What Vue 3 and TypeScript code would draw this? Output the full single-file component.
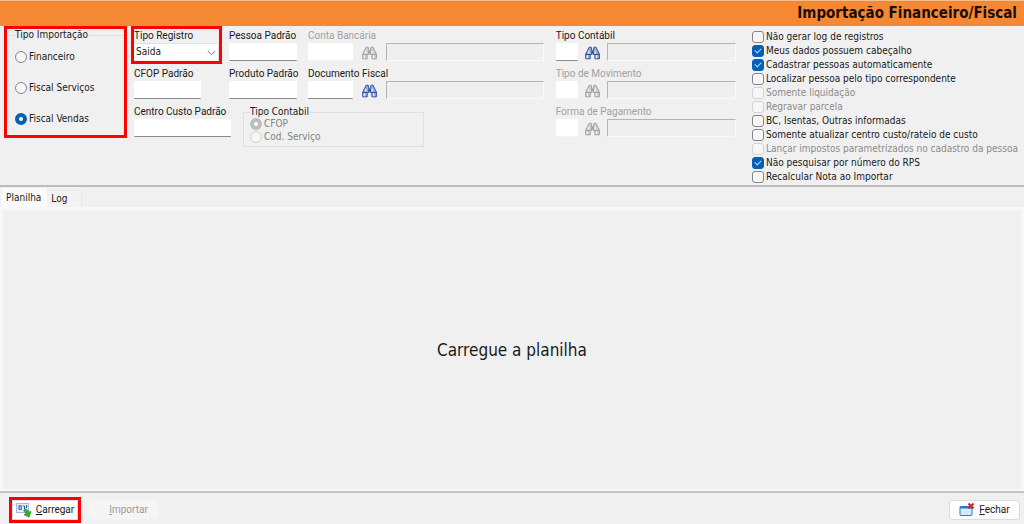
<script setup lang="ts">
import { ref } from 'vue'

interface Option {
  label: string
  checked: boolean
  disabled?: boolean
}

interface Lookup {
  id: string
  label: string
  disabled: boolean
}

const importType = ref('Fiscal Vendas')
const importTypes = ['Financeiro', 'Fiscal Serviços', 'Fiscal Vendas']
const recordType = ref('Saida')
const accountingType = ref('CFOP')
const activeTab = ref('Planilha')
const tabs = ['Planilha', 'Log']

const accountLookup: Lookup = { id: 'conta', label: 'Conta Bancária', disabled: true }
const documentLookup: Lookup = { id: 'documento', label: 'Documento Fiscal', disabled: false }
const sideLookups: Lookup[] = [
  { id: 'contabil', label: 'Tipo Contábil', disabled: false },
  { id: 'movimento', label: 'Tipo de Movimento', disabled: true },
  { id: 'pagamento', label: 'Forma de Pagamento', disabled: true },
]

const options = ref<Option[]>([
  { label: 'Não gerar log de registros', checked: false },
  { label: 'Meus dados possuem cabeçalho', checked: true },
  { label: 'Cadastrar pessoas automaticamente', checked: true },
  { label: 'Localizar pessoa pelo tipo correspondente', checked: false },
  { label: 'Somente liquidação', checked: false, disabled: true },
  { label: 'Regravar parcela', checked: false, disabled: true },
  { label: 'BC, Isentas, Outras informadas', checked: false },
  { label: 'Somente atualizar centro custo/rateio de custo', checked: false },
  { label: 'Lançar impostos parametrizados no cadastro da pessoa', checked: false, disabled: true },
  { label: 'Não pesquisar por número do RPS', checked: true },
  { label: 'Recalcular Nota ao Importar', checked: false },
])
</script>

<template>
  <svg class="defs" aria-hidden="true">
    <symbol id="binoculars" viewBox="0 0 15 14">
      <path d="M4.200 1.200h2l.6 3.300v4H5.200v4.300H.7V8l2-3.800zM9 1.200h2l1.400 3 2 3.800v4.800H9.900V8.500H8.200v-4z" fill="currentColor" fill-opacity=".45" stroke="currentColor" />
      <path d="M6.500 4.500h2.200v3H6.500z" fill="currentColor" />
      <path d="M1 8.500h4M10 8.500h4" stroke="currentColor" />
      <path d="M2.300 9.300v3M3.800 4.800v2.700M11.500 9.300v3M10.200 4.800v2.700" stroke="#fff" stroke-width="1.200" opacity=".85" />
    </symbol>
  </svg>

  <div class="window">
    <header class="title-bar"><h1>Importação Financeiro/Fiscal</h1></header>

    <section class="filters">
      <fieldset class="import-type marked">
        <legend>Tipo Importação</legend>
        <label v-for="type in importTypes" :key="type" class="choice">
          <input v-model="importType" type="radio" name="import-type" :value="type" />
          {{ type }}
        </label>
      </fieldset>

      <div class="fields">
        <div class="field record-type marked">
          <label for="registro">Tipo Registro</label>
          <div class="combo">
            <select id="registro" v-model="recordType">
              <option>Saida</option>
              <option>Entrada</option>
            </select>
            <svg viewBox="0 0 9 6" aria-hidden="true"><path d="M.8 1l3.700 3.700L8.200 1" /></svg>
          </div>
        </div>
        <div class="field person">
          <label for="pessoa">Pessoa Padrão</label>
          <input id="pessoa" type="text" />
        </div>
        <div class="field" :class="{ off: accountLookup.disabled }">
          <label :for="accountLookup.id">{{ accountLookup.label }}</label>
          <div class="lookup wide">
            <input :id="accountLookup.id" type="text" disabled />
            <button type="button" aria-label="Pesquisar conta bancária" disabled><svg><use href="#binoculars" /></svg></button>
            <input class="result" type="text" aria-label="Descrição da conta bancária" disabled />
          </div>
        </div>

        <div class="field cfop">
          <label for="cfop">CFOP Padrão</label>
          <input id="cfop" type="text" />
        </div>
        <div class="field person">
          <label for="produto">Produto Padrão</label>
          <input id="produto" type="text" />
        </div>
        <div class="field">
          <label :for="documentLookup.id">{{ documentLookup.label }}</label>
          <div class="lookup wide">
            <input :id="documentLookup.id" type="text" />
            <button type="button" aria-label="Pesquisar documento fiscal"><svg><use href="#binoculars" /></svg></button>
            <input class="result" type="text" aria-label="Descrição do documento fiscal" disabled />
          </div>
        </div>

        <div class="last-row">
          <div class="field cost-center">
            <label for="centro">Centro Custo Padrão</label>
            <input id="centro" type="text" />
          </div>
          <fieldset class="accounting" disabled>
            <legend>Tipo Contabil</legend>
            <label class="choice">
              <input v-model="accountingType" type="radio" name="accounting" value="CFOP" />
              CFOP
            </label>
            <label class="choice">
              <input v-model="accountingType" type="radio" name="accounting" value="Cod. Serviço" />
              Cod. Serviço
            </label>
          </fieldset>
        </div>
      </div>

      <div class="side-fields">
        <div v-for="item in sideLookups" :key="item.id" class="field" :class="{ off: item.disabled }">
          <label :for="item.id">{{ item.label }}</label>
          <div class="lookup">
            <input :id="item.id" type="text" :disabled="item.disabled" />
            <button type="button" :aria-label="'Pesquisar ' + item.label" :disabled="item.disabled"><svg><use href="#binoculars" /></svg></button>
            <input class="result" type="text" :aria-label="'Descrição: ' + item.label" disabled />
          </div>
        </div>
      </div>

      <div class="options">
        <label v-for="option in options" :key="option.label" class="choice" :class="{ off: option.disabled }">
          <input v-model="option.checked" type="checkbox" :disabled="option.disabled" />
          {{ option.label }}
        </label>
      </div>
    </section>

    <nav class="tabs" role="tablist">
      <button
        v-for="tab in tabs"
        :key="tab"
        type="button"
        role="tab"
        :aria-selected="activeTab === tab"
        :class="{ active: activeTab === tab }"
        @click="activeTab = tab"
      >{{ tab }}</button>
    </nav>

    <main class="sheet"><p>Carregue a planilha</p></main>

    <footer class="actions">
      <button type="button" class="action load marked">
        <svg viewBox="0 0 16 16" aria-hidden="true">
          <rect x=".5" y="1.500" width="12" height="9" fill="#e6eefb" stroke="#a3b8e0" />
          <rect x="3" y="3.800" width="2.200" height="3.500" fill="none" stroke="#2850a8" />
          <path d="M7 4h1.500v3.500M10.500 3v3" fill="none" stroke="#2850a8" />
          <path d="M7.500 8.500l2-1.500c1.800.6 2.800 1.600 3.200 3l2.300-.4-2 5.600-5-2.600 2-1c-.4-1.400-1.200-2.300-2.500-3.100z" fill="#35b522" stroke="#1c8a14" stroke-width=".7" />
        </svg>
        <span><u>C</u>arregar</span>
      </button>
      <button type="button" class="action import" disabled><span><u>I</u>mportar</span></button>
      <button type="button" class="action close">
        <svg viewBox="0 0 16 16" aria-hidden="true">
          <rect x="1" y="4.500" width="12" height="9" rx="1" fill="#d4ebff" stroke="#2478d4" />
          <path d="M1 5.500h12" stroke="#2478d4" stroke-width="2" />
          <path d="M9.500 1.500l5 5M14.500 1.500l-5 5" stroke="#cf2a20" stroke-width="2.200" />
        </svg>
        <span><u>F</u>echar</span>
      </button>
    </footer>
  </div>
</template>

<style>
body {
  margin: 0;
  background: #f0f0f0;
}
</style>

<style scoped>
.defs {
  position: absolute;
  width: 0;
  height: 0;
}

.window {
  --tahoma: Tahoma, "DejaVu Sans Condensed", "DejaVu Sans", sans-serif;
  --system: Roboto, "Liberation Sans", sans-serif;
  display: flex;
  flex-direction: column;
  min-height: 100vh;
  background: #f0f0f0;
  color: #1a1a1a;
  font: 10px/14px var(--tahoma);
}

.window *,
.window *::before {
  box-sizing: border-box;
}

input,
select,
button {
  margin: 0;
  font: inherit;
  color: inherit;
}

.marked {
  outline: 3px solid #fe0000;
}

.title-bar {
  padding: 0 7px;
  border-top: 1px solid #f5c08c;
  background: #f68733;
  text-align: right;
}

h1 {
  margin: 0;
  color: #1a0e04;
  font-size: 15px;
  font-weight: bold;
  line-height: 25px;
}

.filters {
  display: flex;
  align-items: flex-start;
  padding: 3px 0 0 7px;
  border-bottom: 2px solid #bcbcbc;
}

fieldset {
  min-width: 0;
  margin: 0;
  border: 1px solid #dfdfdf;
}

legend {
  padding: 0;
}

.choice {
  display: flex;
  align-items: center;
  gap: 2px;
  white-space: nowrap;
}

.import-type {
  width: 117px;
  height: 106px;
  margin-right: 10px;
  padding: 0 8px;
  border-width: 1px 0 0;
}

.import-type legend {
  line-height: 12px;
}

.import-type .choice {
  height: 14px;
  margin: 9px 0 17px;
}

.import-type .choice + .choice {
  margin-top: 0;
}

input[type="radio"],
input[type="checkbox"] {
  display: grid;
  flex: none;
  place-items: center;
  width: 12px;
  height: 12px;
  border: 1px solid #858585;
  background: #f6f6f6;
  appearance: none;
}

input[type="radio"] {
  border-radius: 50%;
}

input[type="radio"]:checked {
  border: 4px solid #0560b8;
  background: #fff;
}

input[type="radio"]:disabled {
  border-color: #cfcfcf;
}

input[type="radio"]:checked:disabled {
  border-color: #bdbdbd;
}

input[type="checkbox"] {
  border-radius: 3px;
}

input[type="checkbox"]:checked {
  border-color: #0560b8;
  background: #0560b8;
}

input[type="checkbox"]:checked::before {
  content: "";
  width: 6px;
  height: 4px;
  margin-bottom: 2px;
  border: solid #b9d7f2;
  border-width: 0 0 1px 1px;
  transform: rotate(-45deg);
}

input[type="checkbox"]:disabled {
  border-color: #d3d3d3;
}

.fields {
  display: grid;
  flex: 409 1 0;
  grid-template-columns: 95px 79px 1fr;
  row-gap: 6px;
  margin-right: 12px;
}

.field {
  font-family: var(--system);
}

.field > label {
  display: block;
  height: 14px;
  white-space: nowrap;
}

.off {
  color: #a0a0a0;
}

input[type="text"] {
  display: block;
  width: 100%;
  height: 18px;
  padding: 0 3px;
  border: 0;
  border-bottom: 1px solid #8c8c8c;
  border-radius: 1px;
  background: #fff;
}

input[type="text"]:disabled {
  border-bottom-color: #f4f4f4;
}

.record-type {
  width: 85px;
}

.person input {
  width: 68px;
}

.cfop input {
  width: 67px;
}

.cost-center {
  width: 97px;
}

.combo {
  position: relative;
  font-family: var(--tahoma);
}

.combo select {
  display: block;
  width: 100%;
  height: 17px;
  padding: 0 2px;
  border: 1px solid #e2e2e2;
  border-width: 1px 1px 0 0;
  border-radius: 0;
  background: #fff;
  appearance: none;
}

.combo svg {
  position: absolute;
  top: 7px;
  right: 3px;
  width: 9px;
  height: 6px;
  fill: none;
  stroke: #707070;
  pointer-events: none;
}

.lookup {
  display: grid;
  grid-template-columns: 22px 29px 1fr;
}

.lookup.wide {
  grid-template-columns: 45px 33px 1fr;
}

.lookup button {
  display: grid;
  place-items: center;
  padding: 2px 0 0;
  border: 0;
  background: none;
  color: #2f55a0;
}

.lookup button:disabled {
  color: #a2a2a2;
}

.lookup svg {
  width: 15px;
  height: 14px;
}

input.result:disabled {
  border: 1px solid #b4b4b4;
  border-color: #b4b4b4 #fafafa #fafafa #b4b4b4;
  background: #efefef;
}

.last-row {
  display: flex;
  grid-column: 1 / -1;
  gap: 12px;
  height: 43px;
}

.accounting {
  width: 181px;
  height: 42px;
  padding: 0 6px;
  color: #838383;
}

.accounting legend {
  color: #1a1a1a;
  line-height: 14px;
}

.accounting .choice {
  height: 13px;
}

.accounting .choice:first-of-type {
  margin-top: -2px;
}

.side-fields {
  display: grid;
  flex: 180 1 0;
  row-gap: 6px;
  margin-right: 16px;
}

.options {
  flex: none;
  width: 272px;
  padding: 1px 0;
}

.options .choice {
  height: 14px;
}

.options .off {
  color: #8c8c8c;
}

.tabs {
  display: flex;
  align-items: flex-end;
  padding: 1px 1px 0;
}

.tabs button {
  height: 17px;
  padding: 0 9px 0 4px;
  border: 1px solid #e8e8e8;
  border-width: 1px 1px 0 0;
  background: #f3f3f3;
  line-height: 14px;
}

.tabs button + button {
  padding-right: 14px;
}

.tabs .active {
  height: 19px;
  padding: 0 5px;
  border-color: #fafafa;
  background: #fafafa;
}

.sheet {
  display: grid;
  flex: 1;
  place-items: center;
  border: 3px solid #f8f8f8;
  border-width: 3px 3px 2px;
}

.sheet p {
  margin: 0;
  font-size: 17px;
  line-height: 24px;
}

.actions {
  display: flex;
  gap: 10px;
  align-items: center;
  height: 33px;
  padding: 2px 4px 0 12px;
  border-top: 2px solid #c4c4c4;
}

.action {
  display: flex;
  gap: 4px;
  align-items: center;
  justify-content: center;
  height: 20px;
  padding: 0;
  border: 1px solid #dcdcdc;
  border-radius: 3px;
  background: #fdfdfd;
  font-family: var(--system);
}

.action svg {
  width: 16px;
  height: 16px;
}

.load {
  width: 66px;
  border-radius: 0;
}

.import {
  width: 71px;
  padding-left: 10px;
  border-color: #f2f2f2;
  background: #f5f5f5;
  color: #9a9a9a;
}

.close {
  width: 71px;
  margin-left: auto;
}
</style>
